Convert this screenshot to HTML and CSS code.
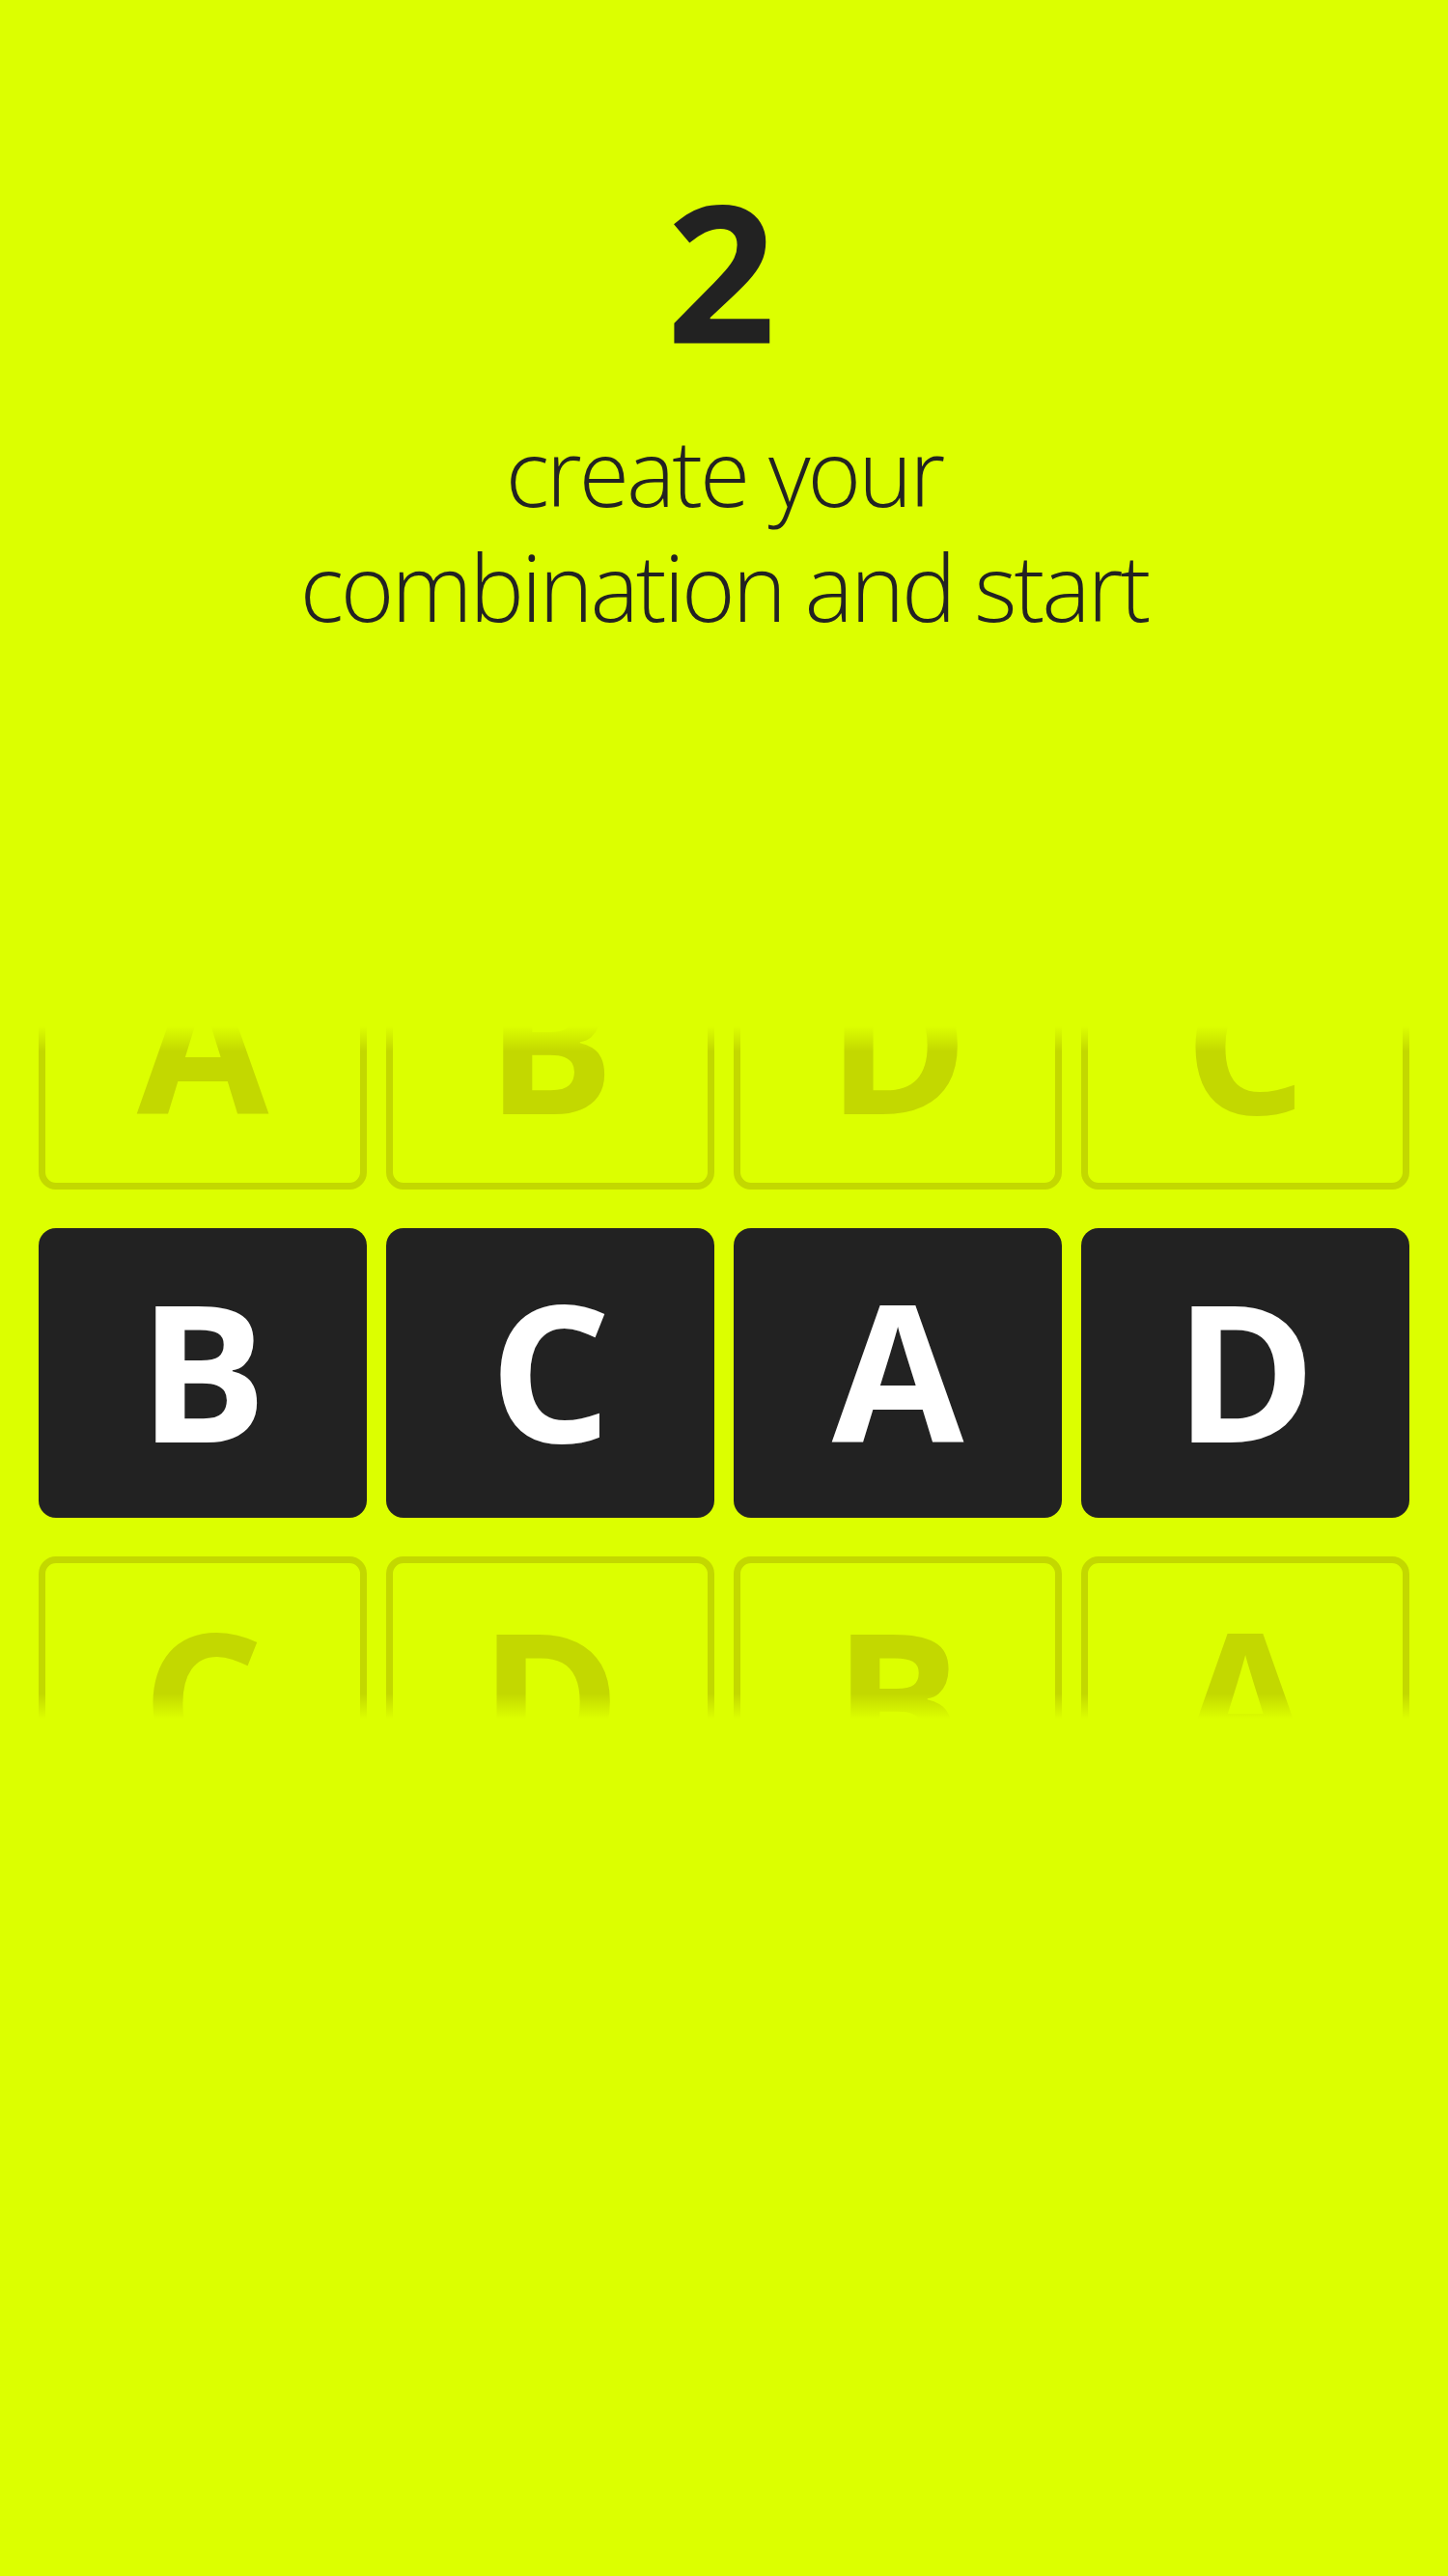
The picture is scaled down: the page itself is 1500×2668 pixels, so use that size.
FILE: index.html
```html
<!DOCTYPE html>
<html lang="en">
<head>
<meta charset="utf-8">
<title>Step 2</title>
<link rel="stylesheet" href="styles.css">
</head>
<body>
<main class="screen">
  <header class="intro">
    <div class="step">2</div>
    <p class="lead">create your<br>combination and start</p>
  </header>
  <section class="wheel">
    <div class="rows">
      <div class="row row-ghost">
        <div class="tile">A</div>
        <div class="tile">B</div>
        <div class="tile">D</div>
        <div class="tile">C</div>
      </div>
      <div class="row row-active">
        <div class="tile">B</div>
        <div class="tile">C</div>
        <div class="tile">A</div>
        <div class="tile">D</div>
      </div>
      <div class="row row-ghost">
        <div class="tile">C</div>
        <div class="tile">D</div>
        <div class="tile">B</div>
        <div class="tile">A</div>
      </div>
    </div>
  </section>
</main>
</body>
</html>
```

FILE: styles.css
```css
html, body {
  margin: 0;
  padding: 0;
  background: #dcff00;
}

.screen {
  width: 1500px;
  height: 2668px;
  background: #dcff00;
  color: #222222;
  font-family: "Open Sans", "Noto Sans", sans-serif;
  overflow: hidden;
}

.intro {
  display: flex;
  flex-direction: column;
  align-items: center;
  padding-top: 179px;
}

.step {
  font-size: 198px;
  font-weight: 700;
  line-height: 1;
  height: 198px;
  margin-right: 6px;
}

.lead {
  margin: 52px 0 0;
  font-size: 95px;
  font-weight: 300;
  line-height: 119px;
  text-align: center;
  letter-spacing: -3px;
}

.wheel {
  position: relative;
  margin-top: 396px;
  height: 717px;
  overflow: hidden;
}

.wheel::before,
.wheel::after {
  content: "";
  position: absolute;
  left: 0;
  right: 0;
  height: 26px;
  z-index: 2;
}

.wheel::before {
  top: 0;
  background: linear-gradient(#dcff00, rgba(220, 255, 0, 0));
}

.wheel::after {
  bottom: 0;
  background: linear-gradient(rgba(220, 255, 0, 0), #dcff00);
}

.rows {
  display: flex;
  flex-direction: column;
  gap: 40px;
  margin-top: -131px;
  padding: 0 40px;
}

.row {
  display: flex;
  gap: 20px;
}

.tile {
  flex: 1;
  height: 300px;
  box-sizing: border-box;
  border-radius: 18px;
  display: flex;
  align-items: center;
  justify-content: center;
  padding-bottom: 10px;
  font-size: 198px;
  font-weight: 700;
  line-height: 1;
}

.row-active .tile {
  background: #222222;
  color: #ffffff;
}

.row-ghost .tile {
  border: 7px solid #c3d800;
  color: #c3d800;
}
```
